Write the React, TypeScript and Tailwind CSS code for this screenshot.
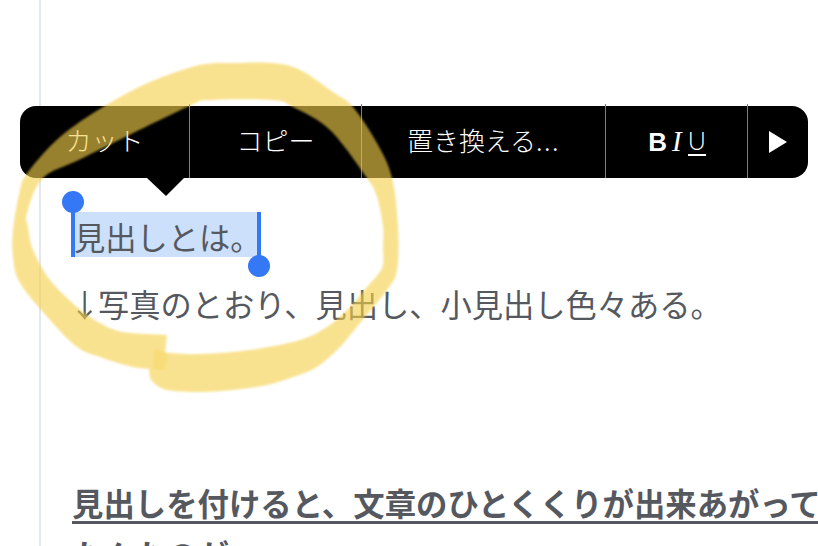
import React from 'react';

const jpFont = 'font-["Noto_Sans_CJK_JP","Noto_Sans",sans-serif]';

type Pt = [number, number];

// Catmull-Rom through the traced points, so the marker edge stays soft
function smooth(points: Pt[]) {
  let d = '';
  for (let i = 0; i < points.length - 1; i++) {
    const p0 = points[Math.max(i - 1, 0)];
    const p1 = points[i];
    const p2 = points[i + 1];
    const p3 = points[Math.min(i + 2, points.length - 1)];
    const c1 = [p1[0] + (p2[0] - p0[0]) / 6, p1[1] + (p2[1] - p0[1]) / 6];
    const c2 = [p2[0] - (p3[0] - p1[0]) / 6, p2[1] - (p3[1] - p1[1]) / 6];
    d += ` C${c1[0]} ${c1[1]} ${c2[0]} ${c2[1]} ${p2[0]} ${p2[1]}`;
  }
  return d;
}

const outerEdge: Pt[] = [
  [163, 370], [133, 367], [100, 357], [77, 347], [50, 320], [20, 283], [13, 257], [13, 230],
  [20, 190], [28, 172], [60, 137], [103, 107], [150, 82], [200, 65], [233, 63], [273, 63],
  [300, 70], [333, 92], [353, 107], [378, 145], [392, 178], [398, 227], [397, 270], [387, 290],
  [360, 323], [340, 347], [317, 367], [293, 377], [267, 385], [233, 390], [200, 392], [167, 390],
  [152, 381], [149, 370],
];

const innerEdge: Pt[] = [
  [157, 351], [170, 353], [200, 354], [250, 350], [300, 340], [327, 327], [347, 310], [367, 287],
  [382, 268], [383, 247], [383, 227], [377, 197], [367, 178], [330, 130], [293, 107], [273, 100],
  [210, 100], [187, 107], [85, 157], [43, 178], [27, 213], [28, 227], [33, 250], [50, 280],
  [77, 307], [100, 323], [123, 332], [167, 335],
];

const markerPath =
  `M${outerEdge[0][0]} ${outerEdge[0][1]}` +
  smooth(outerEdge) +
  ` L${innerEdge[0][0]} ${innerEdge[0][1]}` +
  smooth(innerEdge) +
  ' Z';

function Divider() {
  return <div className="w-px shrink-0 -mt-0.5 bg-[#7d7d7d]" />;
}

function ToolButton({ width, children }: { width: string; children: React.ReactNode }) {
  return <div className={`${width} shrink-0 flex items-center justify-center`}>{children}</div>;
}

function EditMenu() {
  return (
    <div className="absolute left-[20px] top-[106px] w-[788px] h-[72px] flex">
      <div className="absolute inset-0 rounded-[16px] bg-black" />
      <div className={`relative flex w-full text-white text-[26px] leading-none font-light ${jpFont}`}>
        <ToolButton width="w-[169px] pb-[4px]">カット</ToolButton>
        <Divider />
        <ToolButton width="w-[171px] pb-[4px]">コピー</ToolButton>
        <Divider />
        <ToolButton width="w-[243px] pb-[4px]">
          <span className="whitespace-nowrap">置き換える<span className="tracking-[1.5px]">...</span></span>
        </ToolButton>
        <Divider />
        <ToolButton width="w-[141px]">
          <div className="flex items-center pl-[1px] -mt-[1px]">
            <span className="font-bold text-[26px] font-['Liberation_Sans',sans-serif]">B</span>
            <span className="italic font-normal text-[29px] font-['Liberation_Serif',serif] ml-[5px]">I</span>
            <span className="ml-[6px] font-['Lato',sans-serif] font-light text-[25px] border-b-2 border-white pb-[1px]">U</span>
          </div>
        </ToolButton>
        <Divider />
        <div className="flex-1 flex items-center pl-[21px]">
          <svg width="18" height="22" viewBox="0 0 18 22">
            <polygon points="0,0 18,11 0,22" fill="#fff" />
          </svg>
        </div>
      </div>
      <svg className="absolute left-[127px] top-[72px]" width="37" height="18" viewBox="0 0 37 18">
        <polygon points="0,0 37,0 19,18" fill="#000" />
      </svg>
    </div>
  );
}

export default function App() {
  return (
    <div className="relative w-[818px] h-[546px] overflow-hidden bg-white">
      <div className={`ml-[39px] h-full border-l-2 border-[#e2e8ee] pl-[31px] text-[31.25px] text-[#55595f] ${jpFont}`}>
        <p className="pt-[212px] h-[257px] leading-[45px]">
          <span className="relative inline-block w-[186px] h-[45px] pl-[2px] leading-[49px] bg-[#cce0fb] whitespace-nowrap">
            見出しとは。
            <span className="absolute -left-[1px] top-0 h-[45px] w-[4px] bg-[#3478f6]" />
            <span className="absolute -left-[10px] -top-[21px] w-[22px] h-[22px] rounded-full bg-[#3478f6]" />
            <span className="absolute -right-[3px] top-0 h-[45px] w-[4px] bg-[#3478f6]" />
            <span className="absolute -right-[12px] top-[43px] w-[22px] h-[22px] rounded-full bg-[#3478f6]" />
          </span>
        </p>
        <p className="mt-[24px] leading-[45px] whitespace-nowrap">
          <span className="inline-block w-[26px]">
            <span className="-ml-[3px]">↓</span>
          </span>
          写真のとおり、見出し、小見出し色々ある。
        </p>
        <p className="mt-[151px] leading-[52px] font-bold whitespace-nowrap text-[31.4px]">
          <span className="underline decoration-[3px] underline-offset-[5px]">見出しを付けると、文章のひとくくりが出来あがって</span>
          <br />
          たんたのが
        </p>
      </div>

      <EditMenu />

      {/* highlighter ring drawn over the whole screenshot */}
      <svg className="absolute inset-0 pointer-events-none blur-[1px]" width="818" height="546" viewBox="0 0 818 546">
        <path d={markerPath} fill="#f5d04a" fillOpacity="0.62" />
        <path d="M154 349 L167 353 L165 370 L153 369 Z" fill="#f5d04a" fillOpacity="0.35" />
      </svg>
    </div>
  );
}
